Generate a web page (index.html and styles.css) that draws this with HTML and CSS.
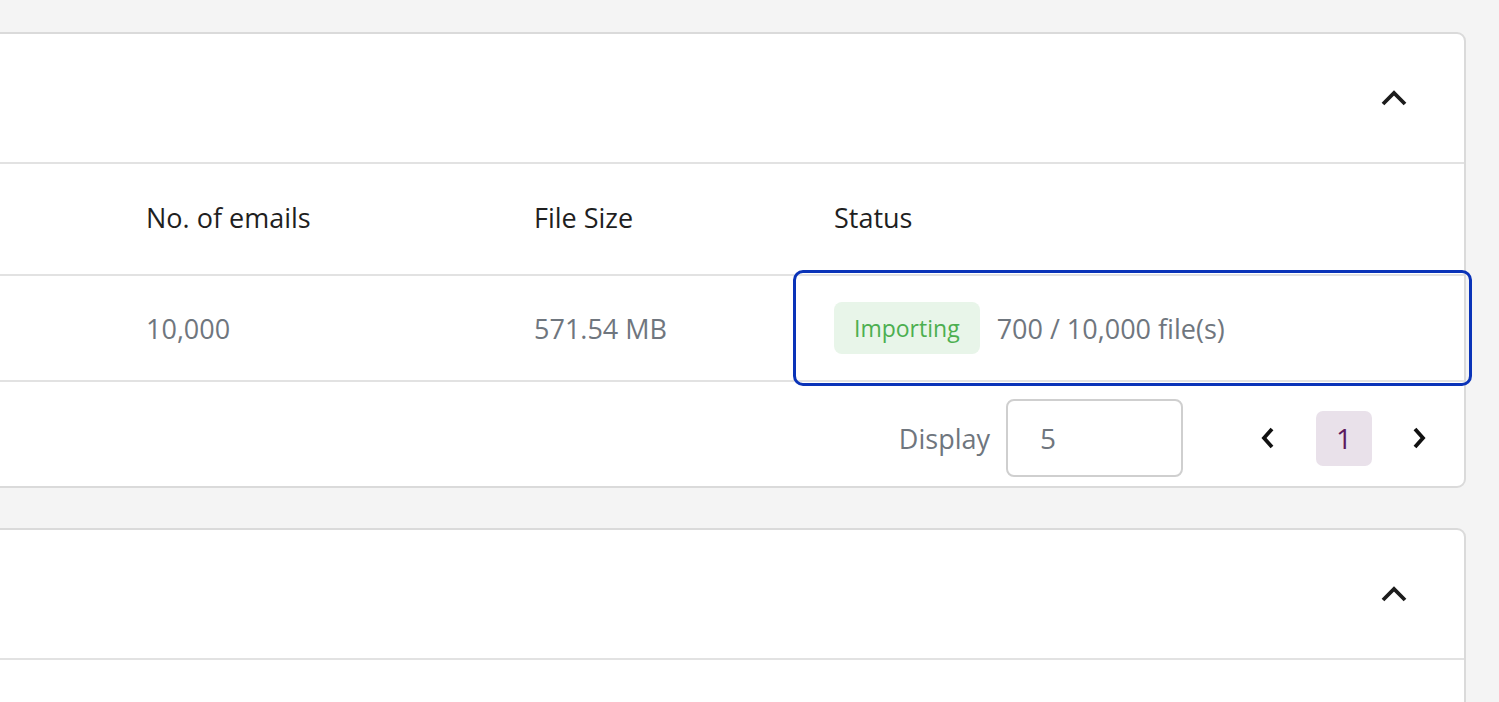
FILE: index.html
```html
<!DOCTYPE html>
<html lang="en">
<head>
    <meta charset="UTF-8">
    <meta name="viewport" content="width=device-width, initial-scale=1.0">
    <title>Imports</title>
    <link rel="stylesheet" href="styles.css">
</head>
<body>
    <div class="page">
        <div class="card">
            <div class="card_head">
                <button class="toggle" aria-label="Collapse">
                    <svg width="26" height="16" viewBox="0 0 26 16"><path d="M2 14 L13 3 L24 14" fill="none" stroke="#1c1c1c" stroke-width="3.8"/></svg>
                </button>
            </div>
            <div class="row head_row">
                <div class="cell">No. of emails</div>
                <div class="cell">File Size</div>
                <div class="cell status_cell">Status</div>
            </div>
            <div class="row data_row">
                <div class="cell">10,000</div>
                <div class="cell">571.54 MB</div>
                <div class="cell status_cell focused">
                    <span class="badge">Importing</span>
                    <span class="progress">700 / 10,000 file(s)</span>
                </div>
            </div>
            <div class="pager">
                <span class="pager_label">Display</span>
                <input class="pager_input" type="text" value="5">
                <button class="pager_arrow" aria-label="Previous">
                    <svg width="14" height="22" viewBox="0 0 14 22"><path d="M11 2 L3 11 L11 20" fill="none" stroke="#111" stroke-width="3.8"/></svg>
                </button>
                <span class="pager_page">1</span>
                <button class="pager_arrow" aria-label="Next">
                    <svg width="14" height="22" viewBox="0 0 14 22"><path d="M3 2 L11 11 L3 20" fill="none" stroke="#111" stroke-width="3.8"/></svg>
                </button>
            </div>
        </div>

        <div class="card">
            <div class="card_head">
                <button class="toggle" aria-label="Collapse">
                    <svg width="26" height="16" viewBox="0 0 26 16"><path d="M2 14 L13 3 L24 14" fill="none" stroke="#1c1c1c" stroke-width="3.8"/></svg>
                </button>
            </div>
            <div class="card_body"></div>
        </div>
    </div>
</body>
</html>
```

FILE: styles.css
```css
body {
    margin: 0;
    background-color: #f4f4f4;
    font-family: "Open Sans", "Noto Sans", sans-serif;
    font-size: 27px;
    color: #1f1f1f;
    overflow: hidden;
    }
.page {
    display: flex;
    flex-direction: column;
    gap: 40px;
    padding: 32px 33px 0 0;
    }
.card {
    margin-left: -40px;
    background-color: #ffffff;
    border: 2px solid #dadada;
    border-radius: 9px;
    }
.card_head {
    height: 128px;
    display: flex;
    align-items: center;
    justify-content: flex-end;
    padding-right: 57px;
    border-bottom: 2px solid #e2e2e2;
    }
.card_body {
    height: 200px;
    }
.toggle {
    border: none;
    background: none;
    padding: 0;
    display: flex;
    }
.row {
    display: grid;
    grid-template-columns: 388px 265px 1fr;
    align-items: center;
    padding-left: 184px;
    border-bottom: 2px solid #e2e2e2;
    }
.head_row {
    height: 112px;
    padding-bottom: 3px;
    box-sizing: border-box;
    }
.data_row {
    height: 104px;
    color: #6f767e;
    }
.cell {
    display: flex;
    align-items: center;
    }
.status_cell {
    padding-left: 35px;
    }
.focused {
    align-self: stretch;
    margin-right: -2px;
    border-radius: 4px;
    outline: 3px solid #0a33b8;
    outline-offset: 3px;
    gap: 17px;
    }
.badge {
    background-color: #e8f5e9;
    color: #4caf50;
    font-size: 23px;
    line-height: 32px;
    padding: 10px 20px;
    border-radius: 8px;
    }
.pager {
    height: 104px;
    display: flex;
    align-items: center;
    justify-content: flex-end;
    padding: 8px 25px 0 0;
    box-sizing: border-box;
    }
.pager_label {
    color: #6f767e;
    margin-right: 16px;
    }
.pager_input {
    width: 141px;
    height: 74px;
    padding: 0 0 0 32px;
    border: 2px solid #cfcfcf;
    border-radius: 8px;
    font-family: inherit;
    font-size: 28px;
    color: #6f767e;
    margin-right: 65px;
    }
.pager_arrow {
    width: 40px;
    height: 40px;
    border: none;
    background: none;
    padding: 0;
    display: flex;
    align-items: center;
    justify-content: center;
    }
.pager_page {
    width: 56px;
    height: 55px;
    margin: 0 27px 0 28px;
    display: flex;
    align-items: center;
    justify-content: center;
    background-color: #e9e1ea;
    color: #5c1a5e;
    border-radius: 7px;
    font-size: 28px;
    }
```
